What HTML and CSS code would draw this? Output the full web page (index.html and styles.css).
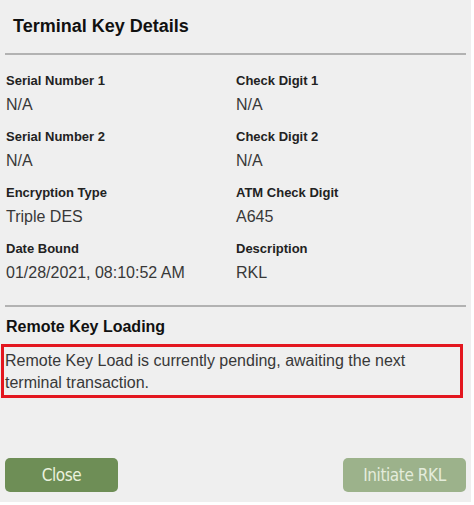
FILE: index.html
```html
<!DOCTYPE html>
<html lang="en">
<head>
    <meta charset="UTF-8">
    <meta name="viewport" content="width=device-width, initial-scale=1.0">
    <title>Terminal Key Details</title>
    <link rel="stylesheet" href="styles.css">
</head>
<body>

    <div class="panel">
        <h2 class="title">Terminal Key Details</h2>
        <div class="divider"></div>

        <!-- Key details -->
        <div class="details">
            <div class="item">
                <div class="label">Serial Number 1</div>
                <div class="value">N/A</div>
            </div>
            <div class="item">
                <div class="label">Check Digit 1</div>
                <div class="value">N/A</div>
            </div>
            <div class="item">
                <div class="label">Serial Number 2</div>
                <div class="value">N/A</div>
            </div>
            <div class="item">
                <div class="label">Check Digit 2</div>
                <div class="value">N/A</div>
            </div>
            <div class="item">
                <div class="label">Encryption Type</div>
                <div class="value">Triple DES</div>
            </div>
            <div class="item">
                <div class="label">ATM Check Digit</div>
                <div class="value">A645</div>
            </div>
            <div class="item">
                <div class="label">Date Bound</div>
                <div class="value">01/28/2021, 08:10:52 AM</div>
            </div>
            <div class="item">
                <div class="label">Description</div>
                <div class="value">RKL</div>
            </div>
        </div>

        <div class="divider divider-low"></div>

        <!-- Remote key loading -->
        <h3 class="section-title">Remote Key Loading</h3>
        <div class="status">Remote Key Load is currently pending, awaiting the next terminal transaction.</div>

        <div class="actions">
            <button class="button">Close</button>
            <button class="button button-disabled">Initiate RKL</button>
        </div>
    </div>

</body>
</html>
```

FILE: styles.css
```css
body {
    margin: 0;
    background: #ffffff;
    font-family: "Liberation Sans", Arial, sans-serif;
}

.panel {
    width: 471px;
    height: 502px;
    background: #efefef;
    display: flex;
    flex-direction: column;
    box-sizing: border-box;
}

.title {
    margin: 15px 0 0 13px;
    font-size: 18px;
    line-height: 22px;
    font-weight: bold;
    color: #111;
}

.divider {
    height: 2px;
    margin: 16px 5px 0 5px;
    background: #b2b2b2;
}

.divider-low {
    margin-top: 22px;
}

.details {
    display: grid;
    grid-template-columns: 230px 1fr;
    row-gap: 14px;
    padding: 18px 0 0 6px;
}

.label {
    font-size: 13px;
    line-height: 16px;
    font-weight: bold;
    color: #222;
}

.value {
    margin-top: 6px;
    font-size: 16px;
    line-height: 20px;
    color: #383838;
}

.section-title {
    margin: 10px 0 0 6px;
    font-size: 16px;
    line-height: 20px;
    font-weight: bold;
    color: #111;
}

.status {
    width: 462px;
    margin: 7px 0 0 1px;
    padding: 3px 1px 1px 1px;
    border: 3px solid #e3161f;
    box-sizing: border-box;
    font-size: 16px;
    line-height: 22px;
    color: #383838;
}

.actions {
    margin-top: auto;
    display: flex;
    justify-content: space-between;
    padding: 0 5px 10px 5px;
}

.button {
    width: 113px;
    height: 34px;
    border: none;
    border-radius: 5px;
    background: #6e8e56;
    color: #eaf2de;
    font-family: "DejaVu Sans Condensed", "DejaVu Sans", sans-serif;
    font-stretch: condensed;
    font-size: 17px;
    letter-spacing: -0.4px;
    cursor: pointer;
}

.button-disabled {
    width: 123px;
    background: #9cb28b;
    color: #e4ecdb;
    cursor: default;
}
```
